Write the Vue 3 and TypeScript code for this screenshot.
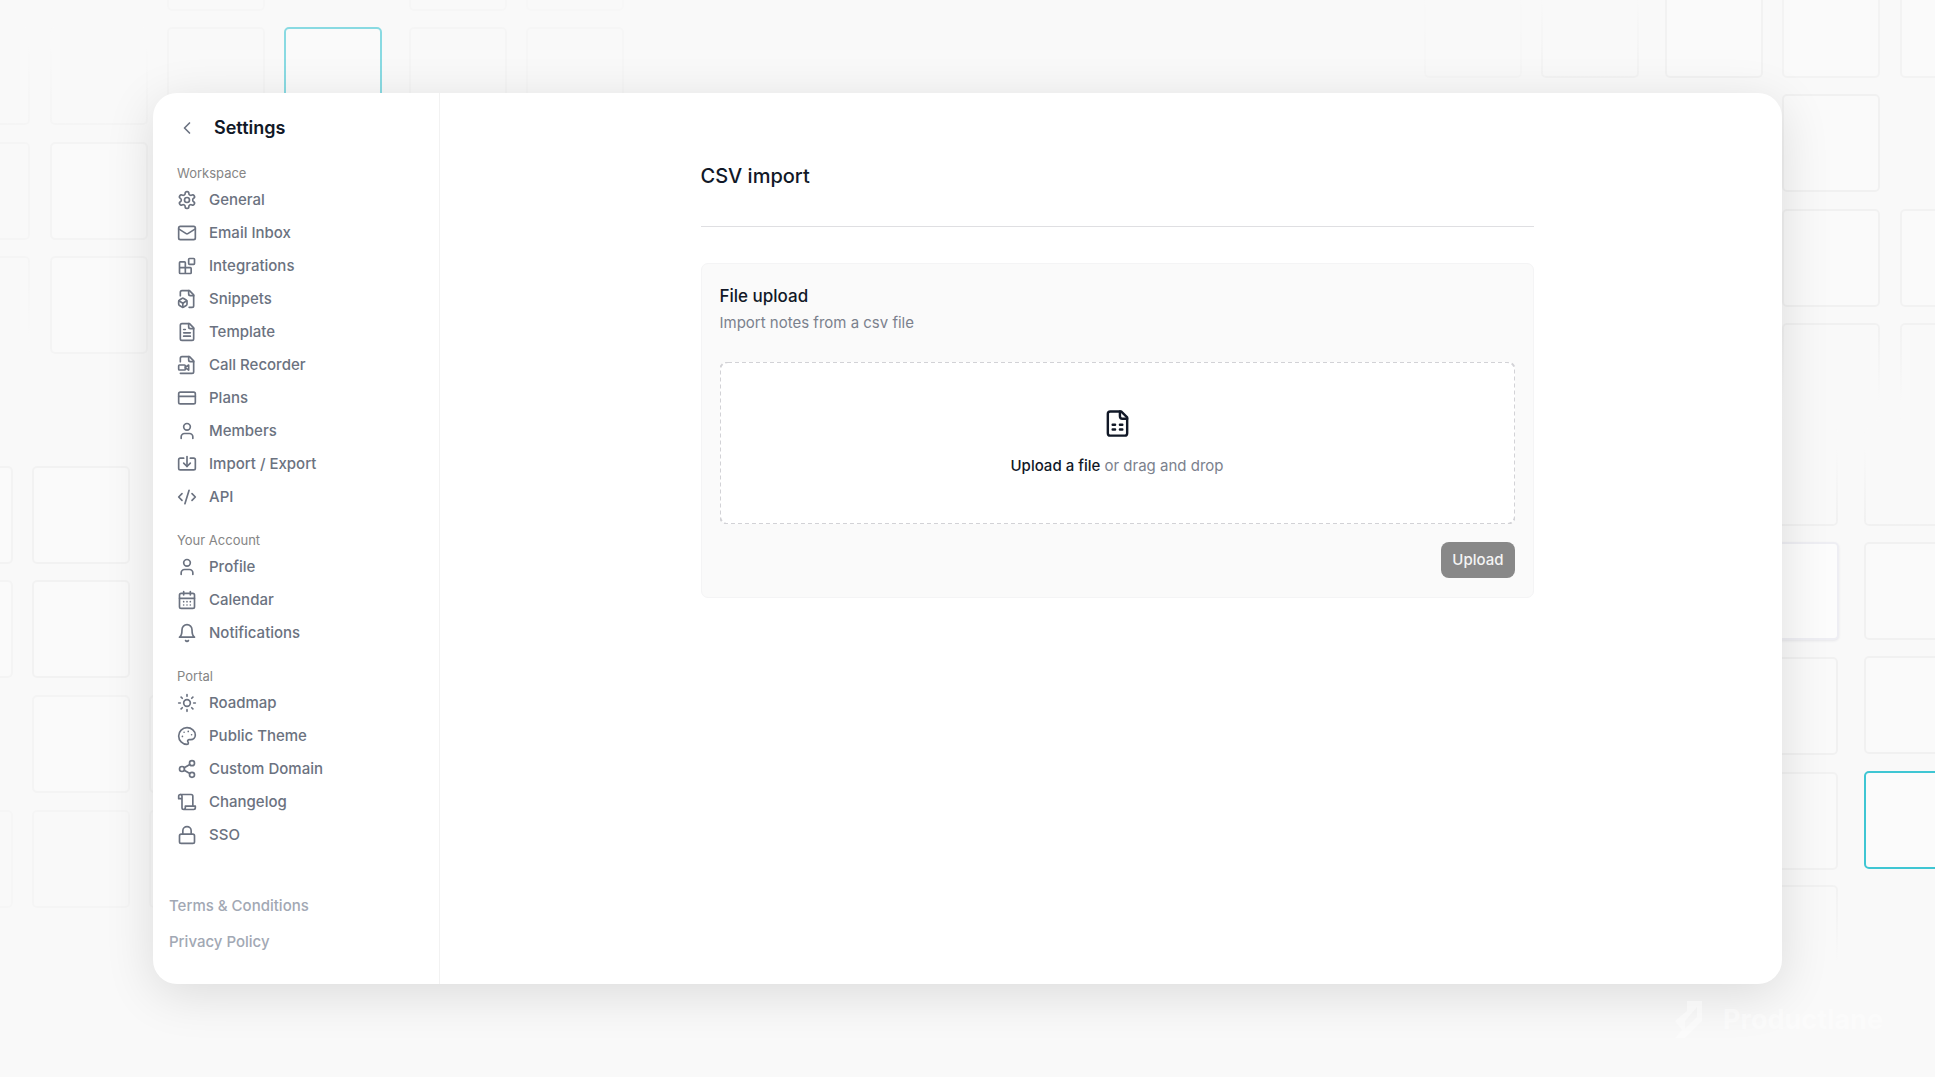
<script setup lang="ts">
import { ref } from 'vue'

interface Shape {
  d?: string
  c?: [number, number, number]
  r?: [number, number, number, number, number]
}
interface NavItem {
  label: string
  icon: string
}
interface NavGroup {
  title: string
  items: NavItem[]
}
interface Tile {
  x: number
  y: number
  o: number
  kind?: 'teal' | 'raised' | 'fade-down' | 'fade-up'
}

const fileOutline = 'M15 2H6a2 2 0 0 0-2 2v16a2 2 0 0 0 2 2h12a2 2 0 0 0 2-2V7Z'
const fileFold = 'M14 2v4a2 2 0 0 0 2 2h4'

const icons: Record<string, Shape[]> = {
  back: [{ d: 'm15 18-6-6 6-6' }],
  settings: [
    {
      d: 'M12.22 2h-.44a2 2 0 0 0-2 2v.18a2 2 0 0 1-1 1.73l-.43.25a2 2 0 0 1-2 0l-.15-.08a2 2 0 0 0-2.73.73l-.22.38a2 2 0 0 0 .73 2.73l.15.1a2 2 0 0 1 1 1.72v.51a2 2 0 0 1-1 1.74l-.15.09a2 2 0 0 0-.73 2.73l.22.38a2 2 0 0 0 2.73.73l.15-.08a2 2 0 0 1 2 0l.43.25a2 2 0 0 1 1 1.73V20a2 2 0 0 0 2 2h.44a2 2 0 0 0 2-2v-.18a2 2 0 0 1 1-1.73l.43-.25a2 2 0 0 1 2 0l.15.08a2 2 0 0 0 2.73-.73l.22-.39a2 2 0 0 0-.73-2.73l-.15-.08a2 2 0 0 1-1-1.74v-.5a2 2 0 0 1 1-1.74l.15-.09a2 2 0 0 0 .73-2.73l-.22-.38a2 2 0 0 0-2.73-.73l-.15.08a2 2 0 0 1-2 0l-.43-.25a2 2 0 0 1-1-1.73V4a2 2 0 0 0-2-2z',
    },
    { c: [12, 12, 3] },
  ],
  mail: [{ r: [2, 4, 20, 16, 2] }, { d: 'm22 7-8.97 5.7a1.94 1.94 0 0 1-2.06 0L2 7' }],
  blocks: [
    { r: [14, 3, 7, 7, 1] },
    { d: 'M10 21V8a1 1 0 0 0-1-1H4a1 1 0 0 0-1 1v12a1 1 0 0 0 1 1h12a1 1 0 0 0 1-1v-5a1 1 0 0 0-1-1H3' },
  ],
  fileBox: [
    { d: 'M14.5 22H18a2 2 0 0 0 2-2V7l-5-5H6a2 2 0 0 0-2 2v4' },
    { d: fileFold },
    {
      d: 'M3 13.1a2 2 0 0 0-1 1.76v3.24a2 2 0 0 0 .97 1.78L6 21.7a2 2 0 0 0 2.03.01L11 19.9a2 2 0 0 0 1-1.76V14.9a2 2 0 0 0-.97-1.78L8 11.3a2 2 0 0 0-2.03-.01Z',
    },
    { d: 'M7 17v5' },
    { d: 'M11.7 14.2 7 17l-4.7-2.8' },
  ],
  fileText: [{ d: fileOutline }, { d: fileFold }, { d: 'M16 13H8' }, { d: 'M16 17H8' }, { d: 'M10 9H8' }],
  fileVideo: [
    { d: 'M4 22h14a2 2 0 0 0 2-2V7l-5-5H6a2 2 0 0 0-2 2v4' },
    { d: fileFold },
    { r: [2, 12, 8, 6, 1] },
    { d: 'm10 15.5 4 2.5v-6l-4 2.5' },
  ],
  card: [{ r: [2, 5, 20, 14, 2] }, { d: 'M2 10h20' }],
  user: [{ d: 'M19 21v-2a4 4 0 0 0-4-4H9a4 4 0 0 0-4 4v2' }, { c: [12, 7, 4] }],
  importExport: [
    { d: 'M12 3v12' },
    { d: 'm8 11 4 4 4-4' },
    { d: 'M8 5H4a2 2 0 0 0-2 2v10a2 2 0 0 0 2 2h16a2 2 0 0 0 2-2V7a2 2 0 0 0-2-2h-4' },
  ],
  code: [{ d: 'm18 16 4-4-4-4' }, { d: 'm6 8-4 4 4 4' }, { d: 'm14.5 4-5 16' }],
  calendar: [
    { d: 'M8 2v4' },
    { d: 'M16 2v4' },
    { r: [3, 4, 18, 18, 2] },
    { d: 'M3 10h18' },
    { d: 'M8 14h.01M12 14h.01M16 14h.01M8 18h.01M12 18h.01M16 18h.01' },
  ],
  bell: [{ d: 'M6 8a6 6 0 0 1 12 0c0 7 3 9 3 9H3s3-2 3-9' }, { d: 'M10.3 21a1.94 1.94 0 0 0 3.4 0' }],
  sun: [
    { c: [12, 12, 4] },
    {
      d: 'M12 2v2M12 20v2M4.93 4.93l1.41 1.41M17.66 17.66l1.41 1.41M2 12h2M20 12h2M6.34 17.66l-1.41 1.41M19.07 4.93l-1.41 1.41',
    },
  ],
  palette: [
    { d: 'M13.5 6.5h.01M17.5 10.5h.01M8.5 7.5h.01M6.5 12.5h.01' },
    {
      d: 'M12 2C6.5 2 2 6.5 2 12s4.5 10 10 10c.926 0 1.648-.746 1.648-1.688 0-.437-.18-.835-.437-1.125-.29-.289-.438-.652-.438-1.125a1.64 1.64 0 0 1 1.668-1.668h1.996c3.051 0 5.555-2.503 5.555-5.554C21.965 6.012 17.461 2 12 2z',
    },
  ],
  share: [{ c: [18, 5, 3] }, { c: [6, 12, 3] }, { c: [18, 19, 3] }, { d: 'M8.59 13.51l6.83 3.98M15.41 6.51l-6.82 3.98' }],
  scroll: [
    { d: 'M8 21h12a2 2 0 0 0 2-2v-2H10v2a2 2 0 1 1-4 0V5a2 2 0 1 0-4 0v3h4' },
    { d: 'M19 17V5a2 2 0 0 0-2-2H4' },
  ],
  lock: [{ r: [3, 11, 18, 11, 2] }, { d: 'M7 11V7a5 5 0 0 1 10 0v4' }],
}

const groups: NavGroup[] = [
  {
    title: 'Workspace',
    items: [
      { label: 'General', icon: 'settings' },
      { label: 'Email Inbox', icon: 'mail' },
      { label: 'Integrations', icon: 'blocks' },
      { label: 'Snippets', icon: 'fileBox' },
      { label: 'Template', icon: 'fileText' },
      { label: 'Call Recorder', icon: 'fileVideo' },
      { label: 'Plans', icon: 'card' },
      { label: 'Members', icon: 'user' },
      { label: 'Import / Export', icon: 'importExport' },
      { label: 'API', icon: 'code' },
    ],
  },
  {
    title: 'Your Account',
    items: [
      { label: 'Profile', icon: 'user' },
      { label: 'Calendar', icon: 'calendar' },
      { label: 'Notifications', icon: 'bell' },
    ],
  },
  {
    title: 'Portal',
    items: [
      { label: 'Roadmap', icon: 'sun' },
      { label: 'Public Theme', icon: 'palette' },
      { label: 'Custom Domain', icon: 'share' },
      { label: 'Changelog', icon: 'scroll' },
      { label: 'SSO', icon: 'lock' },
    ],
  },
]

/* Background tiles, measured from the left and from the right window edge. */
const leftTiles: Tile[] = [
  { x: 167, y: -87, o: 0.3 },
  { x: 409, y: -87, o: 0.3 },
  { x: 526, y: -87, o: 0.2 },
  { x: 50, y: 27, o: 0.4, kind: 'fade-up' },
  { x: 167, y: 27, o: 0.4 },
  { x: 284, y: 27, o: 0.6, kind: 'teal' },
  { x: 409, y: 27, o: 0.4 },
  { x: 526, y: 27, o: 0.3 },
  { x: -68, y: 27, o: 0.4, kind: 'fade-up' },
  { x: -68, y: 142, o: 0.4 },
  { x: 50, y: 142, o: 0.6 },
  { x: -68, y: 256, o: 0.4, kind: 'fade-down' },
  { x: 50, y: 256, o: 0.5 },
  { x: -85, y: 466, o: 0.7 },
  { x: 32, y: 466, o: 0.8 },
  { x: -85, y: 580, o: 0.5 },
  { x: 32, y: 580, o: 0.8 },
  { x: 32, y: 695, o: 0.6 },
  { x: 149, y: 695, o: 0.6 },
  { x: -85, y: 810, o: 0.3 },
  { x: 32, y: 810, o: 0.4 },
  { x: 149, y: 810, o: 0.4 },
]
const rightTiles: Tile[] = [
  { x: 24, y: -20, o: 0.3, kind: 'fade-up' },
  { x: 141, y: -20, o: 0.7, kind: 'fade-up' },
  { x: 265, y: -20, o: 0.8 },
  { x: 382, y: -20, o: 0.7 },
  { x: 500, y: -20, o: 0.7 },
  { x: 382, y: 94, o: 0.9 },
  { x: 382, y: 209, o: 0.9 },
  { x: 500, y: 209, o: 0.8 },
  { x: 382, y: 323, o: 0.9, kind: 'fade-down' },
  { x: 500, y: 323, o: 0.8, kind: 'fade-down' },
  { x: 340, y: 428, o: 0.9, kind: 'fade-up' },
  { x: 464, y: 428, o: 0.9, kind: 'fade-up' },
  { x: 341, y: 542, o: 1, kind: 'raised' },
  { x: 464, y: 542, o: 0.9 },
  { x: 340, y: 657, o: 0.9 },
  { x: 464, y: 656, o: 0.9 },
  { x: 340, y: 772, o: 0.8 },
  { x: 464, y: 771, o: 1, kind: 'teal' },
  { x: 340, y: 885, o: 0.8, kind: 'fade-down' },
]

const fileName = ref('')
function onPick(event: Event): void {
  const input = event.target as HTMLInputElement
  fileName.value = input.files?.[0]?.name ?? ''
}
</script>

<template>
  <div class="stage">
    <svg class="tiles tiles-left" aria-hidden="true">
      <defs>
        <linearGradient id="tile-down" x1="0" y1="0" x2="0" y2="1">
          <stop offset="0" stop-color="#f1f1f1" />
          <stop offset="0.8" stop-color="#f9f9f9" />
        </linearGradient>
        <linearGradient id="tile-up" x1="0" y1="1" x2="0" y2="0">
          <stop offset="0" stop-color="#f1f1f1" />
          <stop offset="0.8" stop-color="#f9f9f9" />
        </linearGradient>
      </defs>
      <rect
        v-for="(t, i) in leftTiles"
        :key="i"
        :x="t.x + 1"
        :y="t.y + 1"
        width="96"
        height="96"
        rx="4"
        :opacity="t.o"
        :class="['tile', t.kind]"
      />
    </svg>
    <svg class="tiles tiles-right" aria-hidden="true">
      <rect
        v-for="(t, i) in rightTiles"
        :key="i"
        :x="t.x + 1"
        :y="t.y + 1"
        width="96"
        height="96"
        rx="4"
        :opacity="t.o"
        :class="['tile', t.kind]"
      />
    </svg>

    <div class="window">
      <aside class="sidebar">
        <header class="side-head">
          <button class="back" type="button" aria-label="Back">
            <svg class="icon" viewBox="0 0 24 24"><path :d="icons.back[0].d" /></svg>
          </button>
          <h2>Settings</h2>
        </header>

        <nav class="nav">
          <section v-for="g in groups" :key="g.title" class="group">
            <h3>{{ g.title }}</h3>
            <ul>
              <li v-for="item in g.items" :key="item.label">
                <a href="#" class="nav-link">
                  <svg class="icon" viewBox="0 0 24 24" aria-hidden="true">
                    <template v-for="(s, i) in icons[item.icon]" :key="i">
                      <path v-if="s.d" :d="s.d" />
                      <circle v-else-if="s.c" :cx="s.c[0]" :cy="s.c[1]" :r="s.c[2]" />
                      <rect v-else-if="s.r" :x="s.r[0]" :y="s.r[1]" :width="s.r[2]" :height="s.r[3]" :rx="s.r[4]" />
                    </template>
                  </svg>
                  <span>{{ item.label }}</span>
                </a>
              </li>
            </ul>
          </section>
        </nav>

        <footer class="legal">
          <a href="#">Terms &amp; Conditions</a>
          <a href="#">Privacy Policy</a>
        </footer>
      </aside>

      <main class="main">
        <div class="content">
          <h1>CSV import</h1>
          <form class="panel" @submit.prevent>
            <h2>File upload</h2>
            <p class="hint">Import notes from a csv file</p>
            <label class="drop">
              <svg class="dashes" aria-hidden="true"><rect width="100%" height="100%" rx="8" /></svg>
              <input class="file" type="file" accept=".csv" @change="onPick" />
              <svg class="file-icon" viewBox="0 0 24 24" aria-hidden="true">
                <path :d="fileOutline" />
                <path :d="fileFold" />
                <path d="M8 13h2M14 13h2M8 17h2M14 17h2" />
              </svg>
              <span class="drop-text"><strong>Upload a file</strong> or drag and drop</span>
            </label>
            <button class="upload" type="submit" :disabled="!fileName">Upload</button>
          </form>
        </div>
      </main>
    </div>

    <div class="brand">
      <svg viewBox="0 0 32 42" aria-hidden="true">
        <path d="M14 2h15v20L12 39H2l7-8-7-9L14 12z M24 8 12 22v8l12-12z" />
      </svg>
      <span>Productlane</span>
    </div>
  </div>
</template>

<style>
body {
  background: #f9f9f9;
}
</style>

<style scoped>
* {
  box-sizing: border-box;
}
.stage {
  position: relative;
  display: flex;
  min-height: 100vh;
  padding: 93px 153px;
  overflow: hidden;
  background: #f9f9f9;
  font-family: Inter, 'Liberation Sans', sans-serif;
  color: #111827;
}
h1,
h2,
h3,
p,
ul {
  margin: 0;
  padding: 0;
}
ul {
  list-style: none;
}
a {
  color: inherit;
  text-decoration: none;
}
.tiles {
  position: absolute;
  top: 0;
  height: 100%;
}
.tiles-left {
  left: 0;
  width: 640px;
}
.tiles-right {
  right: 0;
  width: 535px;
}
.tile {
  fill: #fbfbfb;
  stroke: #f1f1f1;
  stroke-width: 2;
}
.tile.fade-down {
  fill: #fafafa;
  stroke: url(#tile-down);
}
.tile.fade-up {
  fill: #fafafa;
  stroke: url(#tile-up);
}
.tile.teal {
  stroke: #3fc6d3;
}
.tile.raised {
  fill: #fcfcfc;
  stroke: #eeeef3;
  filter: drop-shadow(0 1px 1px rgba(30, 30, 60, 0.08));
}
.window {
  position: relative;
  flex: 1;
  display: flex;
  border-radius: 24px;
  background: #fff;
  box-shadow: 0 10px 50px rgba(0, 0, 0, 0.12);
}
.sidebar {
  flex: none;
  display: flex;
  flex-direction: column;
  width: 287px;
  padding: 19px 16px 30px;
  border-right: 1px solid #f2f2f2;
}
.side-head {
  display: flex;
  align-items: center;
  gap: 17px;
  height: 32px;
  padding-left: 8px;
}
.side-head h2 {
  font-size: 18px;
  line-height: 24px;
  font-weight: 600;
}
.back {
  display: flex;
  padding: 0;
  border: 0;
  background: none;
  color: #6b7280;
}
.icon {
  flex: none;
  width: 20px;
  height: 20px;
  fill: none;
  stroke: currentColor;
  stroke-width: 2;
  stroke-linecap: round;
  stroke-linejoin: round;
}
.nav {
  padding: 2px 0 0 8px;
}
.group {
  padding-top: 17px;
}
.group h3 {
  font-size: 13px;
  line-height: 20px;
  font-weight: 400;
  color: #858585;
}
.nav-link {
  display: flex;
  align-items: center;
  gap: 12px;
  height: 33px;
  font-size: 15px;
  font-weight: 500;
  color: #6b7280;
}
.legal {
  display: flex;
  flex-direction: column;
  gap: 12px;
  margin-top: auto;
  font-size: 15px;
  line-height: 24px;
  font-weight: 500;
  color: #a2a8b4;
}
.main {
  flex: 1;
  min-width: 0;
  padding: 70px 0 0 12px;
}
.content {
  max-width: 833px;
  margin: 0 auto;
}
.content h1 {
  padding-bottom: 36px;
  border-bottom: 1px solid #dfdfe2;
  font-size: 20px;
  line-height: 27px;
  font-weight: 500;
}
.panel {
  display: flex;
  flex-direction: column;
  margin-top: 36px;
  padding: 18px 18px 19px;
  border: 1px solid #f4f4f5;
  border-radius: 7px;
  background: #fafafa;
}
.panel h2 {
  font-size: 17px;
  line-height: 28px;
  font-weight: 500;
}
.hint {
  font-size: 15px;
  line-height: 26px;
  color: #7b818d;
}
.drop {
  position: relative;
  display: flex;
  flex-direction: column;
  align-items: center;
  justify-content: center;
  gap: 16px;
  height: 162px;
  margin-top: 26px;
  border-radius: 8px;
  background: #fff;
}
.dashes {
  position: absolute;
  inset: 0;
  width: 100%;
  height: 100%;
  fill: none;
  stroke: #d2d2d6;
  stroke-width: 2;
  stroke-dasharray: 4 3;
}
.file {
  position: absolute;
  inset: 0;
  width: 100%;
  opacity: 0;
}
.file-icon {
  width: 29px;
  height: 29px;
  fill: none;
  stroke: #111827;
  stroke-width: 2;
  stroke-linecap: round;
  stroke-linejoin: round;
}
.drop-text {
  font-size: 15px;
  line-height: 24px;
  color: #7b818d;
}
.drop-text strong {
  font-weight: 500;
  color: #111827;
}
.upload {
  align-self: flex-end;
  height: 36px;
  margin-top: 18px;
  padding: 0 11px;
  border: 0;
  border-radius: 8px;
  background: #888;
  font: 500 15px/20px Inter, 'Liberation Sans', sans-serif;
  color: #f4f4f4;
}
.brand {
  position: absolute;
  right: 52px;
  bottom: 36px;
  display: flex;
  align-items: center;
  gap: 18px;
  font-size: 27px;
  line-height: 42px;
  font-weight: 700;
  color: rgba(255, 255, 255, 0.4);
}
.brand svg {
  width: 32px;
  height: 42px;
  fill: currentColor;
  fill-rule: evenodd;
}
</style>
